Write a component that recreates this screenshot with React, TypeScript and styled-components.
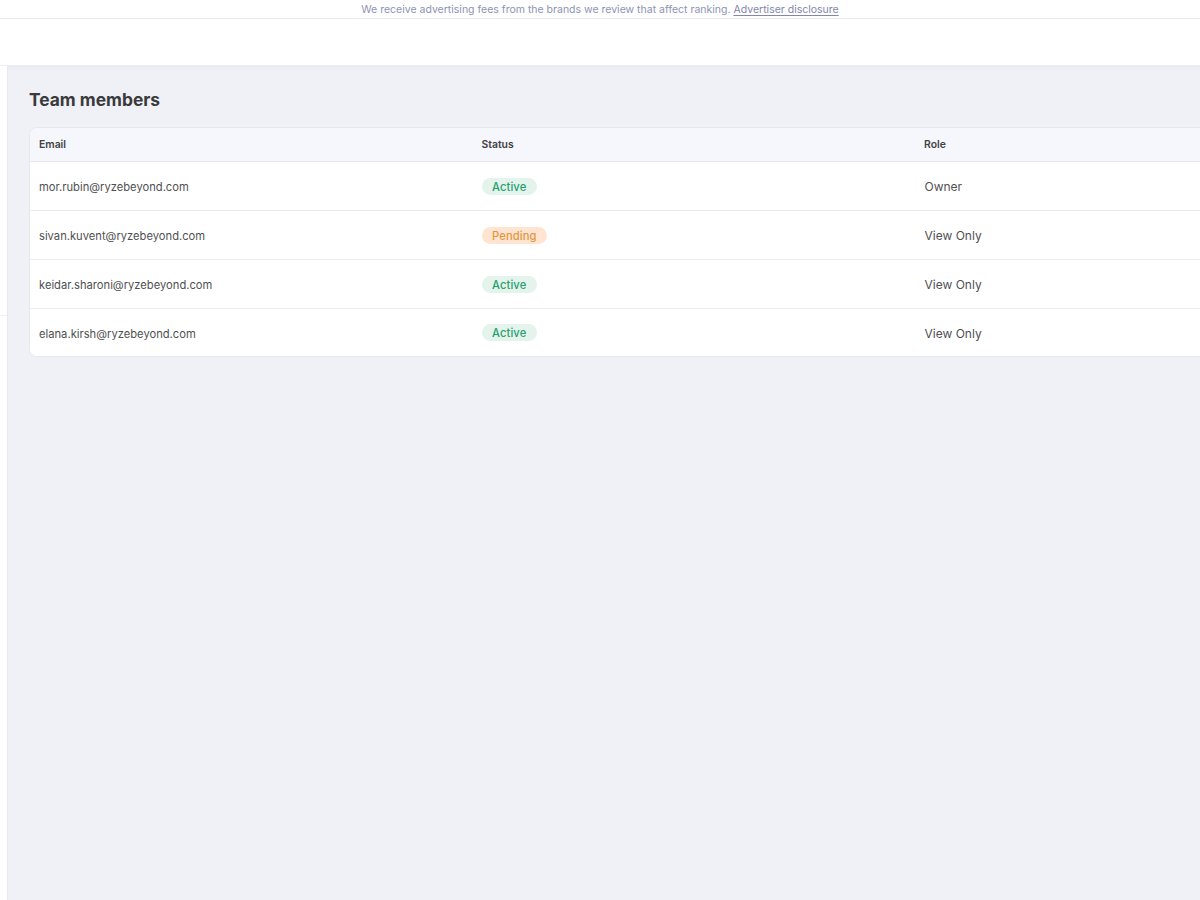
import React from "react";
import styled, { createGlobalStyle } from "styled-components";

const Global = createGlobalStyle`
  html, body { margin: 0; padding: 0; height: 100%; overflow: hidden; background: #fff; }
  body { font-family: Inter, "Liberation Sans", sans-serif; -webkit-font-smoothing: antialiased; }
`;

const Page = styled.div`
  width: 1200px;
  height: 900px;
  display: flex;
  flex-direction: column;
  overflow: hidden;
`;

const Disclosure = styled.div`
  height: 18px;
  flex: none;
  border-bottom: 1px solid #e6e8f3;
  text-align: center;
  font-size: 10.5px;
  line-height: 20px;
  color: #8e93b4;
`;

const DisclosureLink = styled.a`
  color: #8287ab;
  text-decoration: underline;
  text-underline-offset: 2px;
`;

const Header = styled.header`
  height: 46px;
  flex: none;
  background: #fff;
  border-bottom: 1px solid #eceef3;
`;

const Body = styled.div`
  flex: 1;
  display: flex;
  min-height: 0;
`;

const Sidebar = styled.aside`
  width: 7px;
  flex: none;
  background: #fff;
  border-right: 1px solid #e8eaf1;
`;

const SidebarTop = styled.div`
  height: 249px;
  border-bottom: 1px solid #eff0f4;
`;

const Main = styled.main`
  flex: 1;
  min-width: 0;
  background: #eff1f7;
  box-shadow: inset 0 5px 5px -4px rgba(60, 64, 90, 0.05);
  padding: 22px 0 0 21px;
`;

const Title = styled.h1`
  margin: 0 0 15px;
  font-size: 17.4px;
  line-height: 24px;
  font-weight: 700;
  color: #3a3a3c;
`;

const Card = styled.div`
  width: 1400px;
  background: #fff;
  border: 1px solid #e5e8f3;
  border-radius: 8px;
  overflow: hidden;
`;

const Row = styled.div<{ $head?: boolean; $last?: boolean }>`
  display: grid;
  grid-template-columns: 442.5px 442.5px 1fr;
  align-items: center;
  padding-left: 9px;
  height: ${(p) => (p.$head ? 33 : p.$last ? 47 : 48)}px;
  background: ${(p) => (p.$head ? "#f6f7fc" : "#fff")};
  border-bottom: ${(p) => (p.$last ? "none" : p.$head ? "1px solid #e5e8f3" : "1px solid #e9ebf0")};
`;

const HeadCell = styled.div`
  font-size: 10.4px;
  font-weight: 600;
  line-height: 16px;
  color: #424244;
`;

const Cell = styled.div<{ $last?: boolean }>`
  font-size: 11.2px;
  line-height: 16px;
  padding-top: ${(p) => (p.$last ? 2 : 1)}px;
  color: #505052;
`;

const RoleCell = styled(Cell)`
  font-size: 12px;
  padding-left: 0.5px;
`;

const BadgeSlot = styled.div`
  display: flex;
  align-items: center;
`;

const Badge = styled.span<{ $pending?: boolean }>`
  height: 17px;
  padding: 0 10.5px;
  border-radius: 9px;
  font-size: 11.2px;
  font-weight: 500;
  line-height: 19px;
  letter-spacing: 0.1px;
  color: ${(p) => (p.$pending ? "#e2973f" : "#27a06d")};
  background: ${(p) => (p.$pending ? "#ffe4d2" : "#e4f4ed")};
`;

const members = [
  { email: "mor.rubin@ryzebeyond.com", status: "Active", role: "Owner" },
  { email: "sivan.kuvent@ryzebeyond.com", status: "Pending", role: "View Only" },
  { email: "keidar.sharoni@ryzebeyond.com", status: "Active", role: "View Only" },
  { email: "elana.kirsh@ryzebeyond.com", status: "Active", role: "View Only" },
];

export default function App() {
  return (
    <Page>
      <Global />
      <Disclosure>
        We receive advertising fees from the brands we review that affect ranking.{" "}
        <DisclosureLink>Advertiser disclosure</DisclosureLink>
      </Disclosure>
      <Header />
      <Body>
        <Sidebar>
          <SidebarTop />
        </Sidebar>
        <Main>
          <Title>Team members</Title>
          <Card>
            <Row $head>
              <HeadCell>Email</HeadCell>
              <HeadCell>Status</HeadCell>
              <HeadCell>Role</HeadCell>
            </Row>
            {members.map((m, i) => {
              const last = i === members.length - 1;
              return (
                <Row key={m.email} $last={last}>
                  <Cell $last={last}>{m.email}</Cell>
                  <BadgeSlot>
                    <Badge $pending={m.status === "Pending"}>{m.status}</Badge>
                  </BadgeSlot>
                  <RoleCell $last={last}>{m.role}</RoleCell>
                </Row>
              );
            })}
          </Card>
        </Main>
      </Body>
    </Page>
  );
}
